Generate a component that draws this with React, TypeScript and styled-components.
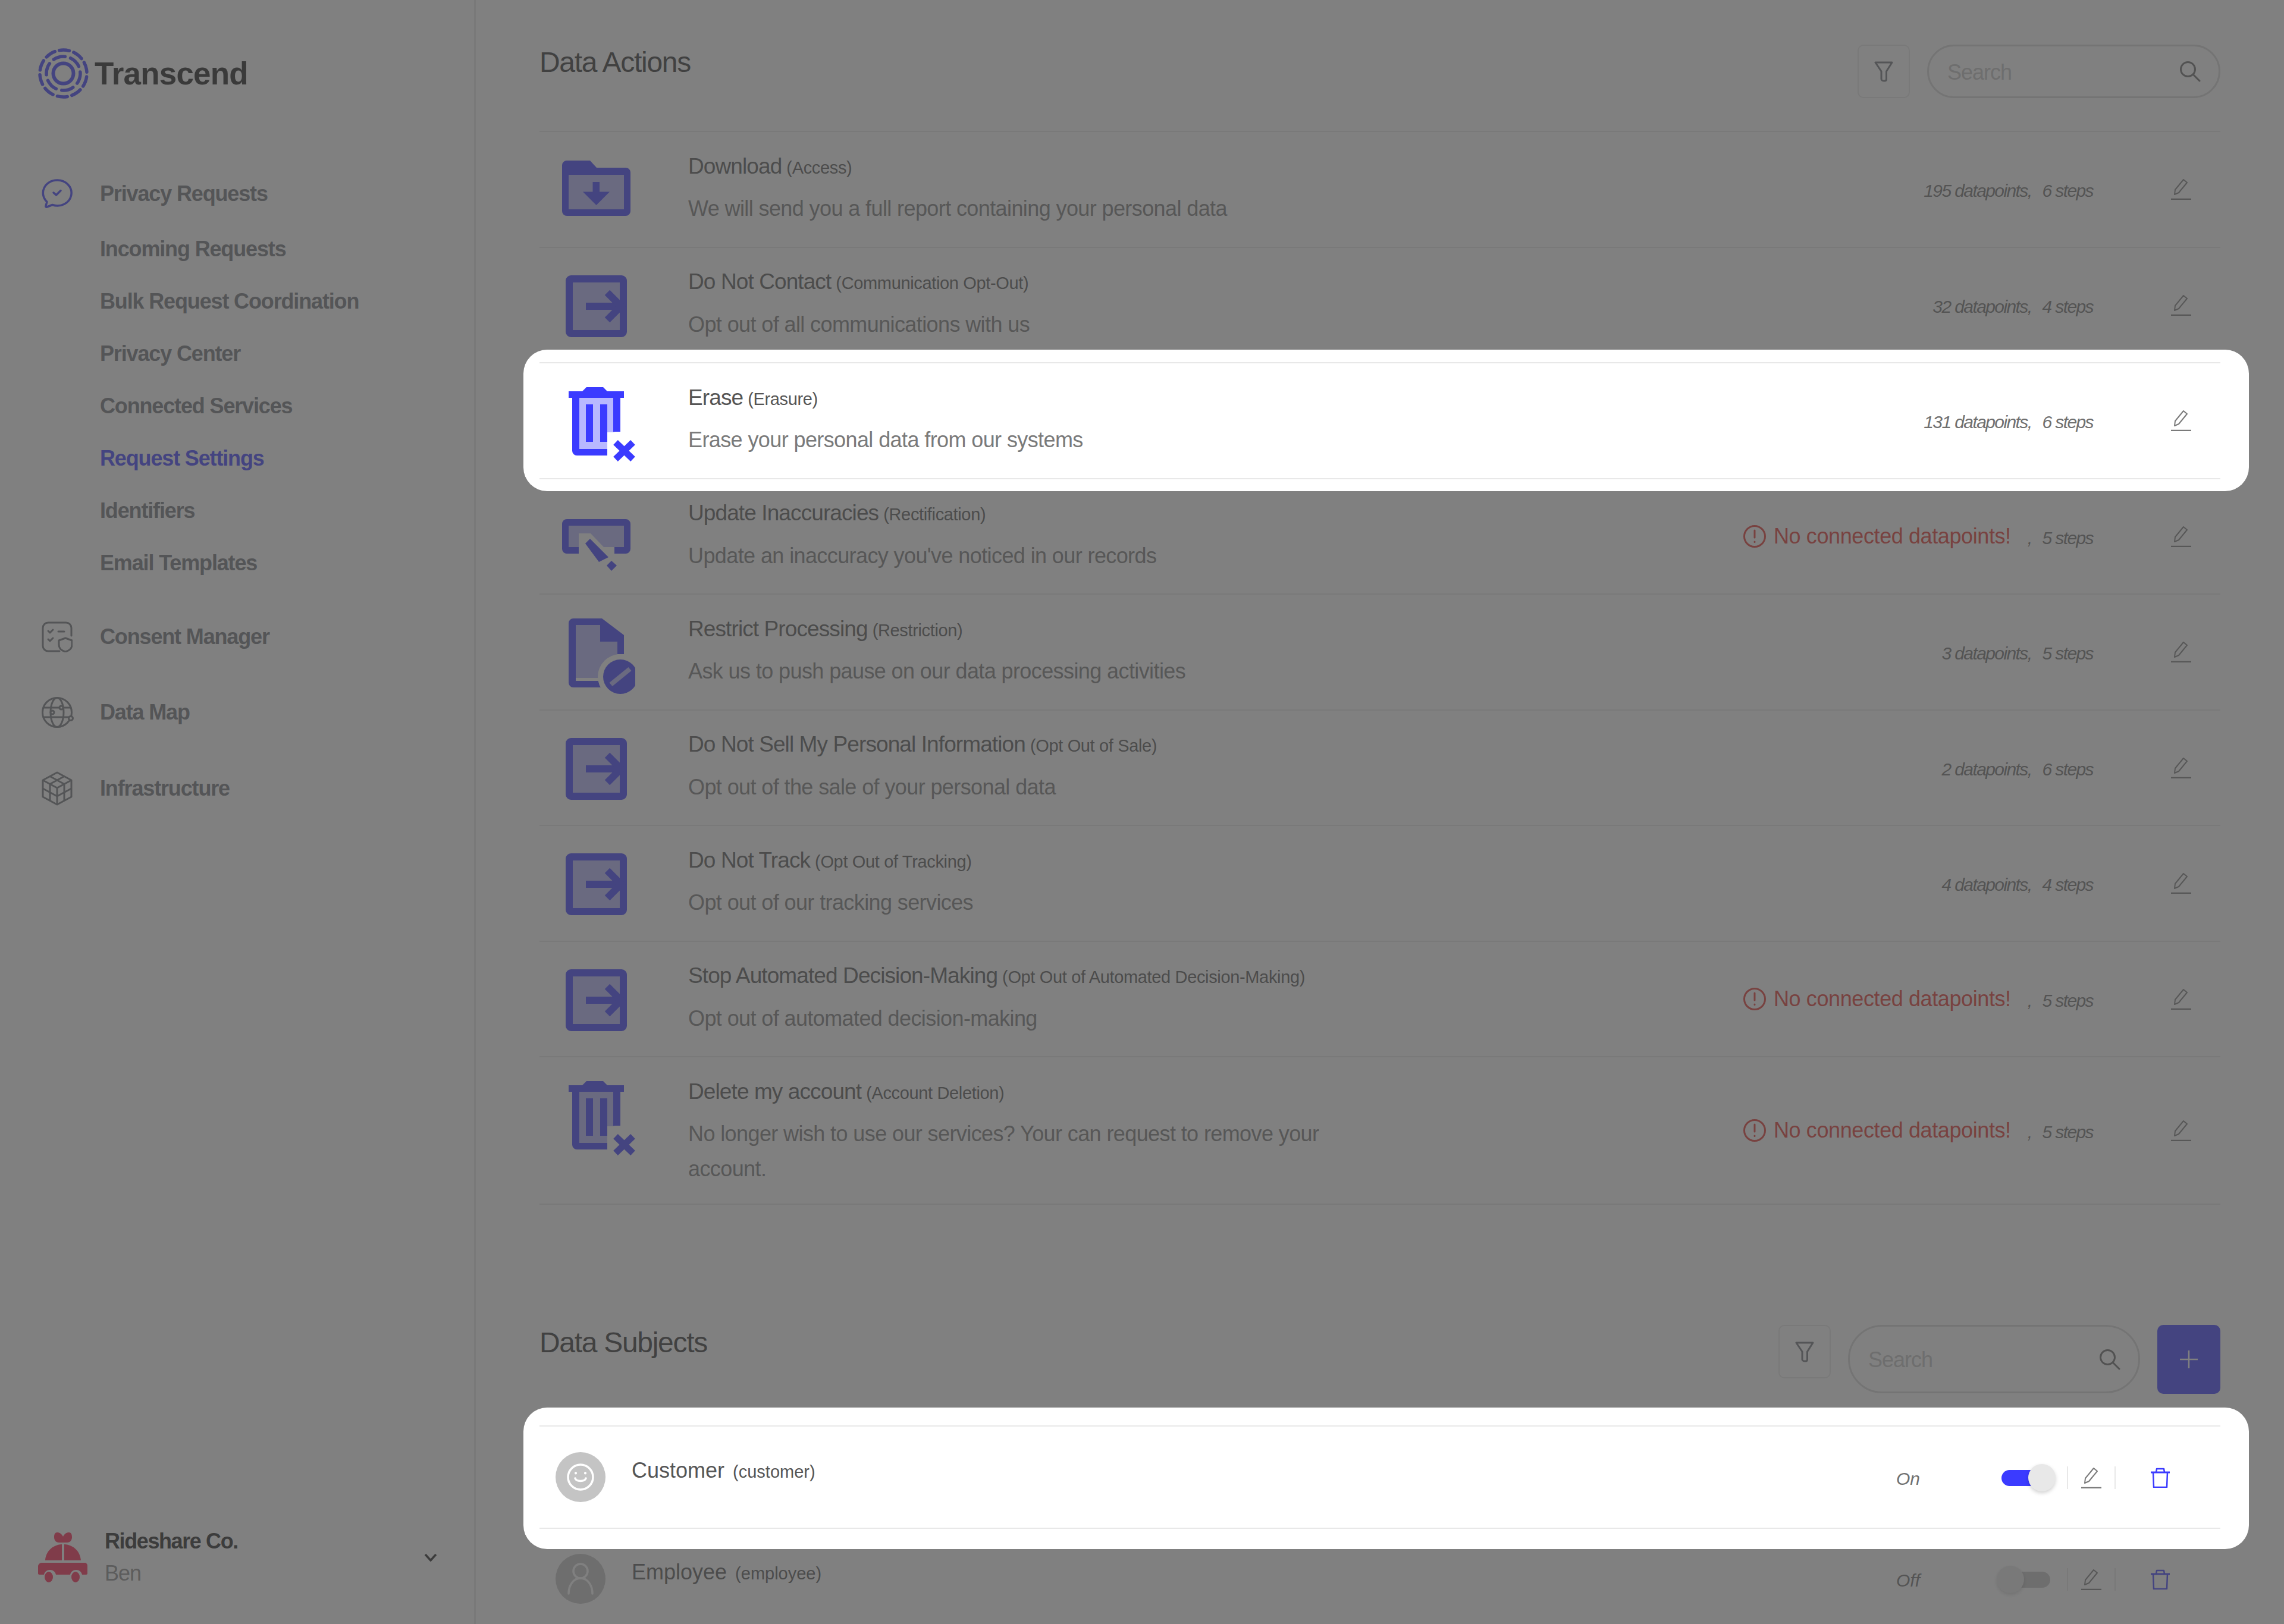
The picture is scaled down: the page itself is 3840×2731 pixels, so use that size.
import React from "react";
import styled, { createGlobalStyle } from "styled-components";

const BLUE = "#3b3bff";
const LIGHT = "#b8b8ff";

const GlobalStyle = createGlobalStyle`
  html, body {
    margin: 0;
    padding: 0;
    background: #fff;
  }
  * {
    box-sizing: border-box;
  }
`;

const Page = styled.div`
  position: relative;
  display: flex;
  width: 3840px;
  height: 2731px;
  overflow: hidden;
  background: #fff;
  font-family: "Liberation Sans", Arial, sans-serif;
  color: #6a6a6a;
`;

/* dim layer of the tour, the spotlit rows sit on top of it */
const Dim = styled.div`
  position: absolute;
  inset: 0;
  z-index: 1;
  background: rgba(72, 72, 72, 0.694);
  pointer-events: none;
`;

const Spotlight = styled.div<{ $top: number; $bottom: number }>`
  position: relative;
  z-index: 2;
  margin: ${(p) => -p.$top}px -48px ${(p) => -p.$bottom}px -27px;
  padding: ${(p) => p.$top}px 48px ${(p) => p.$bottom}px 27px;
  border-radius: 40px;
  background: #fff;
`;

const Sidebar = styled.aside`
  flex: 0 0 800px;
  display: flex;
  flex-direction: column;
  padding: 81px 0 64px 64px;
  border-right: 3px solid #e8e8e8;
`;

const Brand = styled.div`
  display: flex;
  align-items: center;
  gap: 10px;
  height: 85px;
`;

const BrandName = styled.div`
  font-size: 53px;
  font-weight: 700;
  letter-spacing: -0.8px;
  color: #1c1c1c;
`;

const Nav = styled.nav`
  display: flex;
  flex-direction: column;
  margin-top: 116px;
`;

const NavItem = styled.div<{ $active?: boolean; $sub?: boolean; $gap?: number }>`
  display: flex;
  align-items: center;
  height: 88px;
  margin-top: ${(p) => p.$gap ?? 0}px;
  padding-left: ${(p) => (p.$sub ? 104 : 6)}px;
  font-size: 36px;
  font-weight: 700;
  letter-spacing: -1.15px;
  color: ${(p) => (p.$active ? BLUE : "#6f7378")};
`;

const NavIcon = styled.span`
  display: flex;
  width: 98px;
  color: #6f7378;
`;

const Account = styled.div`
  display: flex;
  align-items: center;
  margin-top: auto;
  padding-right: 62px;
`;

const AccountText = styled.div`
  flex: 1;
  margin-left: 28px;
`;

const AccountName = styled.div`
  font-size: 36px;
  font-weight: 700;
  letter-spacing: -1.4px;
  line-height: 42px;
  color: #222;
`;

const AccountUser = styled.div`
  margin-top: 12px;
  font-size: 36px;
  letter-spacing: -1px;
  line-height: 42px;
  color: #8a8a8a;
`;

const Main = styled.main`
  flex: 1;
  padding: 75px 107px 0;
`;

const SectionHeader = styled.header<{ $height: number; $mt?: number }>`
  display: flex;
  align-items: flex-start;
  gap: 29px;
  height: ${(p) => p.$height}px;
  margin-top: ${(p) => p.$mt ?? 0}px;
`;

const SectionTitle = styled.h2`
  flex: 1;
  margin: 0;
  font-size: 48px;
  font-weight: 400;
  line-height: 60px;
  letter-spacing: -1.3px;
  color: #333;
`;

const FilterButton = styled.button`
  display: flex;
  align-items: center;
  justify-content: center;
  width: 88px;
  height: 90px;
  padding: 0;
  background: #fff;
  border: 2px solid #e8e8e8;
  border-radius: 10px;
  color: #6f7378;
`;

const SearchBox = styled.label<{ $tall?: boolean }>`
  display: flex;
  align-items: center;
  width: ${(p) => (p.$tall ? 491 : 493)}px;
  height: ${(p) => (p.$tall ? 115 : 90)}px;
  padding: 0 30px 0 31px;
  border: 3px solid #d8d8d8;
  border-radius: 60px;
  color: #6a6a6a;
`;

const SearchInput = styled.input`
  flex: 1;
  min-width: 0;
  padding: 3px 0 0;
  border: 0;
  outline: 0;
  background: transparent;
  font-family: inherit;
  font-size: 36px;
  letter-spacing: -1px;
  &::placeholder {
    color: #c4c4c4;
    opacity: 1;
  }
`;

const AddButton = styled.button`
  display: flex;
  align-items: center;
  justify-content: center;
  width: 106px;
  height: 116px;
  padding: 0;
  border: 0;
  border-radius: 10px;
  background: ${BLUE};
  color: #fff;
`;

const List = styled.div`
  border-top: 2px solid #e8e8e8;
`;

const Row = styled.div<{ $lit?: boolean }>`
  display: grid;
  grid-template-columns: 192px 1fr auto 132px;
  align-items: center;
  min-height: ${(p) => (p.$lit ? 196.5 : 194.5)}px;
  border-bottom: 2px solid #e8e8e8;
  ${(p) =>
    p.$lit &&
    `
    margin-top: -2px;
    border-top: 2px solid #e8e8e8;
  `}
`;

const ActionIcon = styled.div`
  align-self: start;
  display: flex;
  justify-content: center;
  padding-top: 37px;
`;

const RowText = styled.div`
  align-self: start;
  margin-left: 58px;
  padding: 32.5px 0 28.5px;
`;

const RowTitle = styled.div`
  font-size: 37px;
  line-height: 50px;
  letter-spacing: -0.9px;
  color: #555;
`;

const RowKind = styled.span`
  margin-left: 8px;
  font-size: 29px;
  letter-spacing: -0.35px;
`;

const RowDesc = styled.div`
  max-width: 1120px;
  margin-top: 14.5px;
  font-size: 36px;
  line-height: 59px;
  letter-spacing: -0.6px;
  color: #7a7a7a;
`;

const Meta = styled.div`
  display: flex;
  align-items: center;
  margin-top: 6px;
  margin-right: 82px;
  font-size: 30px;
  font-style: italic;
  letter-spacing: -1.6px;
  color: #707070;
`;

const Warning = styled.span`
  display: flex;
  align-items: center;
  gap: 12px;
  margin: -6px 28px 0 0;
  font-size: 36px;
  font-style: normal;
  letter-spacing: -0.4px;
  color: #e3342f;
`;

const Comma = styled.span`
  margin-right: 18px;
`;

const EditCell = styled.div`
  display: flex;
  justify-content: center;
  color: #7a7a7a;
`;

const SubjectRow = styled(Row)`
  display: flex;
  align-items: flex-start;
  min-height: ${(p) => (p.$lit ? 174 : 172)}px;
  padding-top: ${(p) => (p.$lit ? 1 : 0)}px;
`;

const Avatar = styled.div`
  display: flex;
  align-items: center;
  justify-content: center;
  width: 84px;
  height: 84px;
  margin: 42px 44px 0 27px;
  border-radius: 50%;
  background: #c4c4c4;
  color: #fff;
`;

const SubjectName = styled.div`
  flex: 1;
  margin-top: 48px;
  font-size: 36px;
  line-height: 50px;
  color: #555;
`;

const SubjectKind = styled.span`
  margin-left: 14px;
  font-size: 29px;
`;

const Status = styled.div`
  width: 177px;
  margin-top: 67px;
  font-size: 30px;
  font-style: italic;
  line-height: 40px;
  color: #707070;
`;

const Controls = styled.div`
  display: flex;
  align-items: center;
  height: 38px;
  margin-top: 66px;
`;

const Toggle = styled.div<{ $on?: boolean }>`
  position: relative;
  width: 82px;
  height: 27px;
  margin-right: 28px;
  border-radius: 14px;
  background: ${(p) => (p.$on ? BLUE : "#c4c4c4")};
  &::after {
    content: "";
    position: absolute;
    top: -10px;
    left: ${(p) => (p.$on ? 45 : -8)}px;
    width: 46px;
    height: 46px;
    border-radius: 50%;
    background: #e8e8e8;
    box-shadow: 0 3px 6px rgba(0, 0, 0, 0.18);
  }
`;

const Divider = styled.div`
  width: 2px;
  height: 38px;
  background: #e8e8e8;
`;

const ControlCell = styled.div<{ $w: number }>`
  display: flex;
  justify-content: center;
  width: ${(p) => p.$w}px;
  color: #7a7a7a;
`;

const TrashCell = styled(ControlCell)`
  margin-right: 26px;
  color: ${BLUE};
`;

const LogoMark = () => (
  <svg width="85" height="85" viewBox="0 0 85 85" fill="none" stroke={BLUE} strokeLinecap="round">
    <circle cx="42.5" cy="42.5" r="39.5" strokeWidth="5.5" strokeDasharray="17 7.8" transform="rotate(-100 42.5 42.5)" />
    <circle cx="42.5" cy="42.5" r="28.5" strokeWidth="5.5" strokeDasharray="20 9.85" transform="rotate(-65 42.5 42.5)" />
    <circle cx="42.5" cy="42.5" r="17" strokeWidth="6" />
  </svg>
);

const ChatIcon = () => (
  <svg width="52" height="50" viewBox="0 0 52 50" fill="none" stroke={BLUE} strokeWidth="3.5" strokeLinecap="round" strokeLinejoin="round">
    <path d="M26 2a23.5 21.5 0 1 1-8 41.5l-9 3.5c-1.5.5-2.5-.5-2-2l2-6.5A23.5 21.5 0 0 1 26 2z" />
    <path d="M20 23l4.5 4L32 19.500" />
  </svg>
);

const ConsentIcon = () => (
  <svg width="52" height="52" viewBox="0 0 52 52" fill="none" stroke="currentColor" strokeWidth="3" strokeLinecap="round" strokeLinejoin="round">
    <path d="M30 50H11a9 9 0 0 1-9-9V11a9 9 0 0 1 9-9h30a9 9 0 0 1 9 9v13" />
    <path d="M11 16l3 3 5-5M11 30l3 3 5-5M28 17h10" />
    <path d="M40 28l11 4v7c0 6-4 10-11 12-7-2-11-6-11-12v-7z" />
  </svg>
);

const GlobeIcon = () => (
  <svg width="54" height="54" viewBox="0 0 54 54" fill="none" stroke="currentColor" strokeWidth="3" strokeLinecap="round">
    <circle cx="26" cy="27" r="24.500" />
    <ellipse cx="26" cy="27" rx="11" ry="24.500" />
    <path d="M3 19h46M3 35h46" />
    <circle cx="33" cy="19" r="3" fill="#fff" />
    <circle cx="18" cy="27" r="3" fill="#fff" />
    <circle cx="49" cy="37" r="3.500" fill="#fff" />
  </svg>
);

const CubeIcon = () => (
  <svg width="52" height="58" viewBox="0 0 52 58" fill="none" stroke="currentColor" strokeWidth="3" strokeLinejoin="round">
    <path d="M26 2l24 13v28L26 56 2 43V15z" />
    <path d="M2 15l24 13 24-13M26 28v28" />
    <path d="M14 8.500l24 13M38 8.500l-24 13M14 21.500v28M38 21.500v28M2 29l24 13 24-13" />
  </svg>
);

const CarLogo = () => (
  <svg width="84" height="84" viewBox="0 0 84 84" fill="#ff2150">
    <path d="M42 7C39 1 35 0 32 0c-4 0-5 4-5 8 0 5 3 9 8 9h14c5 0 8-4 8-9 0-4-1-8-5-8-3 0-7 1-10 7z" />
    <path d="M40 20v27H12c1-14 11-26 28-27zM44 20c17 1 27 13 28 27H44z" />
    <path d="M6 51h72c3 0 5 2 5 5v13c0 1-1 2-2 2h-7c-1-5-5-8-10-8s-9 3-10 8H30c-1-5-5-8-10-8s-9 3-10 8H2c-1 0-2-1-2-2V57c0-3 3-6 6-6z" />
    <ellipse cx="18" cy="75" rx="7" ry="9" />
    <ellipse cx="63" cy="75" rx="7" ry="9" />
  </svg>
);

const FilterIcon = () => (
  <svg width="32" height="35" viewBox="0 0 32 35" fill="none" stroke="currentColor" strokeWidth="3" strokeLinejoin="round">
    <path d="M2 2h28L20.500 17v13c0 2-1 3-3 3h-1c-2 0-4.500-1-4.500-3V17z" />
  </svg>
);

const SearchIcon = () => (
  <svg width="36" height="36" viewBox="0 0 36 36" fill="none" stroke="currentColor" strokeWidth="3" strokeLinecap="round">
    <circle cx="14.500" cy="14.500" r="12" />
    <path d="M23 23l11 11" />
  </svg>
);

const PencilIcon = () => (
  <svg width="34" height="36" viewBox="0 0 34 36" fill="none" stroke="currentColor" strokeWidth="2" strokeLinejoin="round">
    <path d="M6 27l1-8L21 2l6 5-14 17z" />
    <path d="M0 35h34" strokeWidth="2.500" />
  </svg>
);

const SmallTrash = () => (
  <svg width="32" height="34" viewBox="0 0 32 34" fill="none" stroke="currentColor" strokeWidth="2.500" strokeLinejoin="round">
    <path d="M0 8h32" strokeWidth="3" />
    <path d="M9 8l1-6h12l1 6M4 8l1 25h22l1-25" />
  </svg>
);

const WarnIcon = () => (
  <svg width="40" height="40" viewBox="0 0 40 40" fill="none" stroke="currentColor" strokeWidth="3" strokeLinecap="round">
    <circle cx="20" cy="20" r="17.500" />
    <path d="M20 10v12M20 29v.5" />
  </svg>
);

/* big row icons share a 130px box so they sit on one centre line */
const Glyph = ({ x, y, children }: { x: number; y: number; children: React.ReactNode }) => (
  <svg width="130" height="130" viewBox="0 0 130 130">
    <g transform={`translate(${x} ${y})`}>{children}</g>
  </svg>
);

const FolderGlyph = () => (
  <Glyph x={7} y={11}>
    <path fill={BLUE} d="M0 8a8 8 0 0 1 8-8h39l11 12h49a8 8 0 0 1 8 8v65a8 8 0 0 1-8 8H8a8 8 0 0 1-8-8z" />
    <rect x="11" y="24" width="93" height="58" fill={LIGHT} />
    <path fill={BLUE} d="M51.500 36H63v16.500h17L57.500 75 35 52.500h16.500z" />
  </Glyph>
);

const ExitGlyph = () => (
  <Glyph x={13} y={9}>
    <rect x="6" y="6" width="91" height="92" rx="3" fill={LIGHT} stroke={BLUE} strokeWidth="12" />
    <path d="M34 52h54" stroke={BLUE} strokeWidth="12" fill="none" />
    <path d="M70 29l23 23-23 23" stroke={BLUE} strokeWidth="12" fill="none" />
  </Glyph>
);

const TrashGlyph = () => (
  <Glyph x={18} y={3}>
    <path fill={LIGHT} d="M16 16h61v60H65v30H16z" />
    <path fill={BLUE} d="M23 7l7-7h28l7 7h28v11h-6v57H75V18H18v86h47v11H14a8 8 0 0 1-8-8V18H0V7z" />
    <rect x="29" y="29" width="12" height="63" fill={BLUE} />
    <rect x="53" y="29" width="12" height="63" fill={BLUE} />
    <path d="M79 93l29 28M108 93l-29 28" stroke={BLUE} strokeWidth="11" fill="none" />
  </Glyph>
);

const ScreenGlyph = () => (
  <Glyph x={7} y={30}>
    <path fill={BLUE} d="M8 0h99a8 8 0 0 1 8 8v42a8 8 0 0 1-8 8H88V47h16V11H11v36h17v11H8a8 8 0 0 1-8-8V8a8 8 0 0 1 8-8z" />
    <path fill={LIGHT} d="M11 11h93v36H70L48 24H28v23H11z" />
    <path fill={BLUE} d="M39 41l8-8 31 31-16 8z" />
    <path fill={BLUE} d="M75 78l8-8 9 8-9 9z" />
  </Glyph>
);

const DocGlyph = () => (
  <Glyph x={18} y={3}>
    <path fill={LIGHT} d="M10 10h44v20h28v70H10z" />
    <path fill={BLUE} d="M8 0h48l37 28v32H82V39H53V11H12v94h45v11H8a8 8 0 0 1-8-8V8a8 8 0 0 1 8-8z" />
    <circle cx="87" cy="98" r="38" fill="#fff" />
    <circle cx="87" cy="98" r="29" fill={BLUE} />
    <path d="M71 111l32-26" stroke={LIGHT} strokeWidth="8" fill="none" />
  </Glyph>
);

type ActionRow = {
  icon: React.ReactNode;
  title: string;
  kind: string;
  desc: string;
  points?: number;
  steps: number;
  lit?: boolean;
};

const actions: ActionRow[] = [
  { icon: <FolderGlyph />, title: "Download", kind: "(Access)", desc: "We will send you a full report containing your personal data", points: 195, steps: 6 },
  { icon: <ExitGlyph />, title: "Do Not Contact", kind: "(Communication Opt-Out)", desc: "Opt out of all communications with us", points: 32, steps: 4 },
  { icon: <TrashGlyph />, title: "Erase", kind: "(Erasure)", desc: "Erase your personal data from our systems", points: 131, steps: 6, lit: true },
  { icon: <ScreenGlyph />, title: "Update Inaccuracies", kind: "(Rectification)", desc: "Update an inaccuracy you've noticed in our records", steps: 5 },
  { icon: <DocGlyph />, title: "Restrict Processing", kind: "(Restriction)", desc: "Ask us to push pause on our data processing activities", points: 3, steps: 5 },
  { icon: <ExitGlyph />, title: "Do Not Sell My Personal Information", kind: "(Opt Out of Sale)", desc: "Opt out of the sale of your personal data", points: 2, steps: 6 },
  { icon: <ExitGlyph />, title: "Do Not Track", kind: "(Opt Out of Tracking)", desc: "Opt out of our tracking services", points: 4, steps: 4 },
  { icon: <ExitGlyph />, title: "Stop Automated Decision-Making", kind: "(Opt Out of Automated Decision-Making)", desc: "Opt out of automated decision-making", steps: 5 },
  { icon: <TrashGlyph />, title: "Delete my account", kind: "(Account Deletion)", desc: "No longer wish to use our services? Your can request to remove your account.", steps: 5 },
];

const subItems = ["Incoming Requests", "Bulk Request Coordination", "Privacy Center", "Connected Services", "Request Settings", "Identifiers", "Email Templates"];

const ActionItem = ({ a }: { a: ActionRow }) => (
  <Row $lit={a.lit}>
    <ActionIcon>{a.icon}</ActionIcon>
    <RowText>
      <RowTitle>
        {a.title}
        <RowKind>{a.kind}</RowKind>
      </RowTitle>
      <RowDesc>{a.desc}</RowDesc>
    </RowText>
    <Meta>
      {a.points !== undefined ? (
        <span>{a.points} datapoints</span>
      ) : (
        <Warning><WarnIcon />No connected datapoints!</Warning>
      )}
      <Comma>,</Comma>
      <span>{a.steps} steps</span>
    </Meta>
    <EditCell><PencilIcon /></EditCell>
  </Row>
);

const SubjectControls = ({ on }: { on?: boolean }) => (
  <>
    <Status>{on ? "On" : "Off"}</Status>
    <Controls>
      <Toggle $on={on} />
      <Divider />
      <ControlCell $w={78}><PencilIcon /></ControlCell>
      <Divider />
      <TrashCell $w={150}><SmallTrash /></TrashCell>
    </Controls>
  </>
);

export default function App() {
  return (
    <Page>
      <GlobalStyle />
      <Dim />
      <Sidebar>
        <Brand>
          <LogoMark />
          <BrandName>Transcend</BrandName>
        </Brand>
        <Nav>
          <NavItem>
            <NavIcon><ChatIcon /></NavIcon>
            Privacy Requests
          </NavItem>
          {subItems.map((item, i) => (
            <NavItem key={item} $sub $gap={i === 0 ? 5 : 0} $active={item === "Request Settings"}>
              {item}
            </NavItem>
          ))}
          <NavItem $gap={36}>
            <NavIcon><ConsentIcon /></NavIcon>
            Consent Manager
          </NavItem>
          <NavItem $gap={39}>
            <NavIcon><GlobeIcon /></NavIcon>
            Data Map
          </NavItem>
          <NavItem $gap={40}>
            <NavIcon><CubeIcon /></NavIcon>
            Infrastructure
          </NavItem>
        </Nav>
        <Account>
          <CarLogo />
          <AccountText>
            <AccountName>Rideshare Co.</AccountName>
            <AccountUser>Ben</AccountUser>
          </AccountText>
          <svg width="22" height="14" viewBox="0 0 22 14" fill="none" stroke="#222" strokeWidth="3.500">
            <path d="M2 2l9 10 9-10" />
          </svg>
        </Account>
      </Sidebar>
      <Main>
        <SectionHeader $height={145}>
          <SectionTitle>Data Actions</SectionTitle>
          <FilterButton><FilterIcon /></FilterButton>
          <SearchBox>
            <SearchInput placeholder="Search" />
            <SearchIcon />
          </SearchBox>
        </SectionHeader>
        <List>
          {actions.map((a) =>
            a.lit ? (
              <Spotlight key={a.title} $top={23.5} $bottom={20}>
                <ActionItem a={a} />
              </Spotlight>
            ) : (
              <ActionItem key={a.title} a={a} />
            )
          )}
        </List>
        <SectionHeader $height={171} $mt={202.5}>
          <SectionTitle>Data Subjects</SectionTitle>
          <FilterButton><FilterIcon /></FilterButton>
          <SearchBox $tall>
            <SearchInput placeholder="Search" />
            <SearchIcon />
          </SearchBox>
          <AddButton>
            <svg width="30" height="30" viewBox="0 0 30 30" stroke="currentColor" strokeWidth="2.500">
              <path d="M15 0v30M0 15h30" />
            </svg>
          </AddButton>
        </SectionHeader>
        <Spotlight $top={32} $bottom={34}>
          <SubjectRow $lit>
            <Avatar>
              <svg width="46" height="46" viewBox="0 0 46 46" fill="none" stroke="currentColor" strokeWidth="3.500" strokeLinecap="round">
                <circle cx="23" cy="23" r="21" />
                <path d="M14 25c2 6 16 6 18 0" />
                <path d="M15 16v.5M31 16v.5" strokeWidth="4" />
              </svg>
            </Avatar>
            <SubjectName>
              Customer<SubjectKind>(customer)</SubjectKind>
            </SubjectName>
            <SubjectControls on />
          </SubjectRow>
        </Spotlight>
        <SubjectRow>
          <Avatar>
            <svg width="44" height="54" viewBox="0 0 44 54" fill="none" stroke="currentColor" strokeWidth="3.500" strokeLinecap="round">
              <circle cx="22" cy="14" r="12" />
              <path d="M2 52c0-14 8-26 20-26s20 12 20 26" />
            </svg>
          </Avatar>
          <SubjectName>
            Employee<SubjectKind>(employee)</SubjectKind>
          </SubjectName>
          <SubjectControls />
        </SubjectRow>
      </Main>
    </Page>
  );
}
